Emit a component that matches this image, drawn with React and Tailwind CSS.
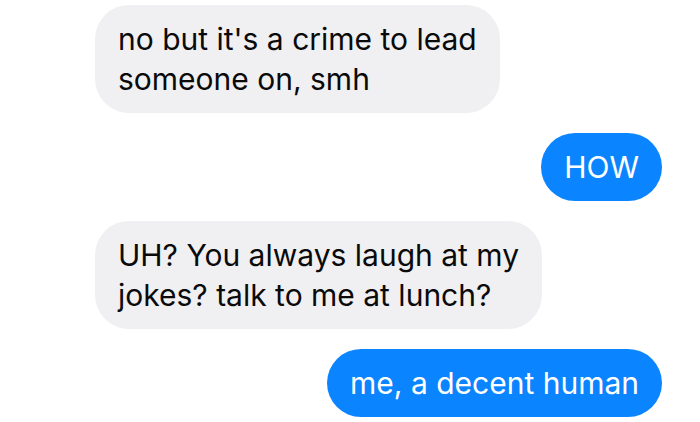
import React from "react";

function Bubble({ side, children }) {
  const base =
    "whitespace-nowrap rounded-[34px] px-[23px] py-[14px] text-[30px] leading-[40px] tracking-normal";
  return (
    <div className={side === "right" ? "flex justify-end" : "flex justify-start"}>
      <div
        className={
          side === "right"
            ? base + " bg-[#0a84ff] text-white"
            : base + " bg-[#f0eff1] text-[#0a0a0a]"
        }
      >
        {children}
      </div>
    </div>
  );
}

export default function App() {
  return (
    <div
      className="w-[700px] h-[422px] overflow-hidden bg-white flex flex-col pt-[5px] pl-[95px] pr-[38px] gap-[20px]"
      style={{ fontFamily: 'Inter, "Liberation Sans", sans-serif' }}
    >
      <Bubble side="left">
        no but it's a crime to lead
        <br />
        someone on, smh
      </Bubble>
      <Bubble side="right">HOW</Bubble>
      <Bubble side="left">
        UH? You always laugh at my
        <br />
        jokes? talk to me at lunch?
      </Bubble>
      <Bubble side="right">me, a decent human</Bubble>
    </div>
  );
}
